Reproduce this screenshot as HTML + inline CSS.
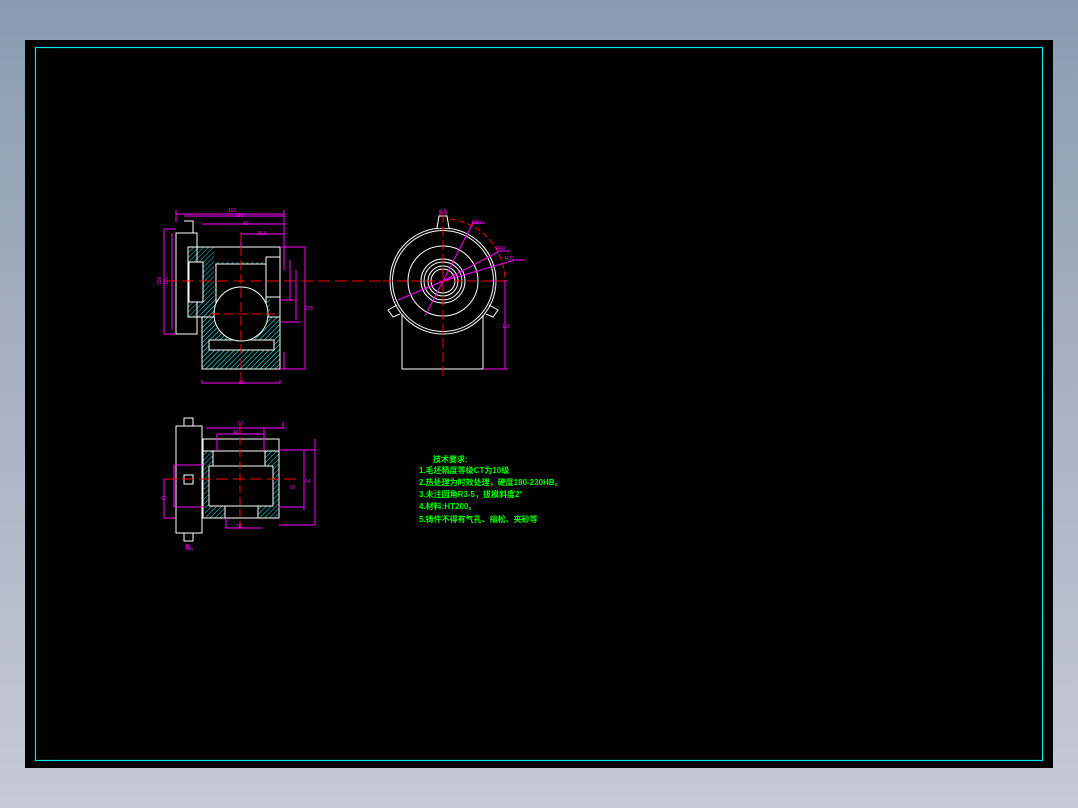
<!DOCTYPE html>
<html><head><meta charset="utf-8"><style>
html,body{margin:0;padding:0;width:1078px;height:808px;overflow:hidden;background:linear-gradient(#8a9bb1,#c6cad6);}
svg{position:absolute;left:0;top:0}
</style></head><body>
<svg width="1078" height="808" viewBox="0 0 1078 808" xmlns="http://www.w3.org/2000/svg">
<defs>
<pattern id="h" width="3.5" height="3.5" patternUnits="userSpaceOnUse" patternTransform="rotate(45)">
<line x1="0" y1="0" x2="0" y2="3.5" stroke="#20e0e0" stroke-width="1"/>
</pattern>
</defs>
<rect x="25" y="40" width="1028" height="728" fill="#000"/>
<rect x="35.5" y="47.5" width="1007" height="713" fill="none" stroke="#00e5e5" stroke-width="1.2"/>

<g shape-rendering="crispEdges">
<!-- TOP LEFT VIEW -->
<g fill="none" stroke-width="1">
<path d="M188 247 H280 V270 H270 V265 H265 V262 H215 V300 H202 V369 H280 V317 H270 V290 H265 V280 H280 V247 Z" fill="url(#h)" stroke="none"/>
<rect x="202" y="317" width="78" height="52" fill="url(#h)"/>
<rect x="188" y="247" width="26" height="70" fill="url(#h)"/>
<rect x="176" y="233" width="21" height="101" stroke="#fff"/>
<path d="M184 221 H193 V233" stroke="#fff"/>
<rect x="188" y="247" width="92" height="70" stroke="#fff"/>
<rect x="202" y="317" width="78" height="52" stroke="#fff"/>
<rect x="209" y="340" width="65" height="10" stroke="#fff" fill="#000"/>
<rect x="216" y="264" width="50" height="40" stroke="#fff" fill="#000"/>
<rect x="189" y="262" width="14" height="40" stroke="#fff" fill="#000"/>
<rect x="266" y="257" width="14" height="40" stroke="#fff" fill="#000"/>
<circle cx="241" cy="314" r="27" stroke="#fff" fill="#000" shape-rendering="auto"/>
<g stroke="#f0f">
<path d="M176 210 V222 M284 210 V270 M176 214 H284 M184 216 H284 M202 224 H284 M241 234 H284 M241 234 V247"/>
<path d="M305 247 V369 M280 247 H305 M280 369 H305 M164 229 V334 M164 229 H176 M164 334 H176 M172 233 V330"/>
<path d="M290 260 V300 M280 300 H295 M296 270 V320 M281 322 H300 M202 380 V383 H280 V380 M284 352 V369"/>
</g>
<path d="M165 281 H505" stroke="#f00" stroke-dasharray="12 5"/>
<path d="M241 232 V382" stroke="#f00" stroke-dasharray="10 4"/>
<path d="M210 314 H275" stroke="#f00" stroke-dasharray="10 4"/>
</g>

<!-- TOP RIGHT VIEW -->
<g fill="none" stroke-width="1" shape-rendering="auto">
<rect x="402" y="315" width="81" height="54" stroke="#fff" shape-rendering="crispEdges"/>
<circle cx="443" cy="281" r="53" stroke="#fff" fill="#000"/>
<circle cx="443" cy="281" r="50.5" stroke="#fff"/>
<circle cx="443" cy="281" r="35" stroke="#fff"/>
<circle cx="443" cy="281" r="22" stroke="#fff"/>
<circle cx="443" cy="281" r="19" stroke="#fff"/>
<circle cx="443" cy="281" r="15" stroke="#fff"/>
<circle cx="443" cy="281" r="12" stroke="#fff"/>
<path d="M437 228 L439 216 H447 L449 228" stroke="#fff" fill="#000"/>
<path d="M397 305 L388 310 L393 317 L400 314" stroke="#fff"/>
<path d="M489 305 L498 310 L493 317 L486 314" stroke="#fff"/>
<path d="M450 219 A62 62 0 0 1 505 281" stroke="#f00" stroke-dasharray="6 3"/>
<g stroke="#f0f">
<path d="M443 281 L473 223 M443 281 L398 300 M443 281 L500 251 M443 281 L515 260 M425 316 L443 281 M473 223 H485 M500 251 H510 M515 260 H525"/>
<path d="M483 281 H508 M483 369 H508 M505 281 V369 M440 215 V210 M446 215 V210"/>
</g>
<path d="M443 212 V378" stroke="#f00" stroke-dasharray="10 4"/>
<path d="M383 281 H503" stroke="#f00" stroke-dasharray="10 4"/>
</g>

<!-- BOTTOM VIEW -->
<g fill="none" stroke-width="1">
<rect x="203" y="451" width="10" height="15" fill="url(#h)"/>
<rect x="265" y="451" width="14" height="15" fill="url(#h)"/>
<rect x="204" y="466" width="5" height="40" fill="url(#h)"/>
<rect x="273" y="466" width="6" height="40" fill="url(#h)"/>
<rect x="205" y="506" width="20" height="12" fill="url(#h)"/>
<rect x="258" y="506" width="21" height="12" fill="url(#h)"/>
<rect x="176" y="426" width="26" height="107" stroke="#fff"/>
<rect x="184" y="418" width="9" height="8" stroke="#fff"/>
<rect x="184" y="533" width="9" height="8" stroke="#fff"/>
<rect x="184" y="475" width="9" height="9" stroke="#fff"/>
<rect x="203" y="439" width="76" height="79" stroke="#fff"/>
<path d="M203 451 H279 M209 466 H273 M209 506 H273 M213 451 V466 M265 451 V466 M225 506 V518 M258 506 V518 M209 466 V506 M273 466 V506" stroke="#fff"/>
<g stroke="#f0f">
<path d="M206 428 H285 M217 434 H264 M217 434 V451 M264 428 V451 M283 422 V428 M279 450 H315 M315 439 V525 M279 525 H315 M304 451 V510 M279 507 H304"/>
<path d="M174 465 H203 M174 465 V507 M174 507 H203 M164 479 V518 M164 479 H176 M164 518 H176 M226 518 V528 H262 M187 545 V549 H193"/>
</g>
<path d="M165 479 H300" stroke="#f00" stroke-dasharray="12 5"/>
<path d="M240 425 V528" stroke="#f00" stroke-dasharray="8 4"/>
</g>
</g>

<g font-family="'Liberation Sans','Noto Sans CJK SC',sans-serif" font-size="5" fill="#f0f">
<text x="228" y="212">160</text><text x="235" y="217">130</text><text x="243" y="225">90</text><text x="257" y="235">35.5</text>
<text x="161" y="285" transform="rotate(-90 161 285)">156</text><text x="168" y="285" transform="rotate(-90 168 285)">115</text>
<text x="239" y="384">80</text><text x="305" y="310">225</text>
<text x="472" y="224">R50</text><text x="496" y="250">R60</text><text x="505" y="260">R70</text><text x="502" y="328">100</text>
<text x="440" y="213">12</text>
<text x="238" y="425">62</text><text x="233" y="434">46</text><text x="305" y="483">64</text><text x="290" y="489">50</text>
<text x="161" y="500">60</text><text x="236" y="528">28</text><text x="185" y="548">15</text>
</g>
<g font-family="'Liberation Sans','Noto Sans CJK SC',sans-serif" font-size="8" fill="#0f0" font-weight="bold">
<text x="433" y="462">技术要求:</text>
<text x="419" y="473">1.毛坯精度等级CT为10级</text>
<text x="419" y="485">2.热处理为时效处理，硬度180-230HB。</text>
<text x="419" y="497">3.未注圆角R3-5，拔模斜度2°</text>
<text x="419" y="509">4.材料:HT200。</text>
<text x="419" y="522">5.铸件不得有气孔、缩松、夹砂等</text>
</g>
</svg>
</body></html>
